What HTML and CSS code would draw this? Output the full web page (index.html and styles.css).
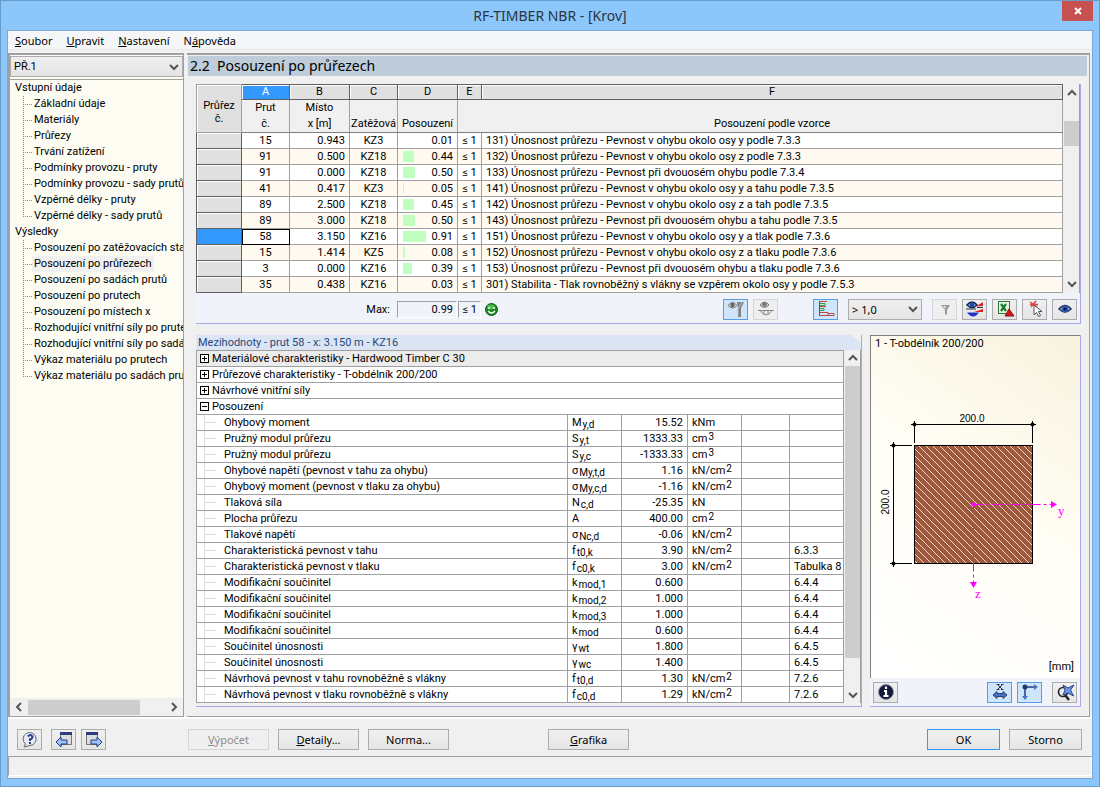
FILE: index.html
```
<!DOCTYPE html>
<html lang="cs">
<head>
<meta charset="utf-8">
<title>RF-TIMBER NBR - [Krov]</title>
<link rel="stylesheet" href="styles.css">
</head>
<body>
<div class="window">
  <header class="titlebar">
    <h1>RF-TIMBER NBR - [Krov]</h1>
    <button class="close" aria-label="Zavřít"><svg width="8" height="8" viewBox="0 0 8 8"><path d="M1 1l6 6M7 1l-6 6" stroke="#fff" stroke-width="2"/></svg></button>
  </header>
  <div class="client">
    <nav class="menu">
      <a href="#"><u>S</u>oubor</a><a href="#"><u>U</u>pravit</a><a href="#"><u>N</u>astavení</a><a href="#">N<u>á</u>pověda</a>
    </nav>
    <div class="panels">
      <aside class="side">
        <select class="case" aria-label="Případ"><option>PŘ.1</option></select>
        <div class="tree">
          <div class="root">Vstupní údaje</div>
          <ul>
            <li><a href="#">Základní údaje</a></li>
            <li><a href="#">Materiály</a></li>
            <li><a href="#">Průřezy</a></li>
            <li><a href="#">Trvání zatížení</a></li>
            <li><a href="#">Podmínky provozu - pruty</a></li>
            <li><a href="#">Podmínky provozu - sady prutů</a></li>
            <li><a href="#">Vzpěrné délky - pruty</a></li>
            <li><a href="#">Vzpěrné délky - sady prutů</a></li>
          </ul>
          <div class="root">Výsledky</div>
          <ul>
            <li><a href="#">Posouzení po zatěžovacích stavech</a></li>
            <li><a href="#" class="current">Posouzení po průřezech</a></li>
            <li><a href="#">Posouzení po sadách prutů</a></li>
            <li><a href="#">Posouzení po prutech</a></li>
            <li><a href="#">Posouzení po místech x</a></li>
            <li><a href="#">Rozhodující vnitřní síly po prutech</a></li>
            <li><a href="#">Rozhodující vnitřní síly po sadách prutů</a></li>
            <li><a href="#">Výkaz materiálu po prutech</a></li>
            <li><a href="#">Výkaz materiálu po sadách prutů</a></li>
          </ul>
        </div>
        <div class="hscroll">
          <svg width="18" height="16" viewBox="0 0 18 16"><path d="M11 4l-4 4 4 4" class="chev"/></svg>
          <div class="htrack"><div class="hthumb"></div></div>
          <svg width="18" height="16" viewBox="0 0 18 16"><path d="M7 4l4 4-4 4" class="chev"/></svg>
        </div>
      </aside>
      <main class="main">
        <h2>2.2&nbsp; Posouzení po průřezech</h2>
        <div class="body">
          <section class="results">
            <div class="gridrow">
              <table class="grid">
                <colgroup><col class="w45"><col class="w48"><col class="w60"><col class="w48"><col class="w60"><col class="w24"><col></colgroup>
                <thead>
                  <tr class="letters"><th rowspan="2" class="corner">Průřez<br>č.</th><th class="sel">A</th><th>B</th><th>C</th><th>D</th><th>E</th><th>F</th></tr>
                  <tr class="names"><th>Prut<br>č.</th><th>Místo<br>x [m]</th><th>Zatěžová</th><th>Posouzení</th><th class="nb"></th><th>Posouzení podle vzorce</th></tr>
                </thead>
                <tbody>
                  <tr><th></th><td>15</td><td>0.943</td><td>KZ3</td><td>0.01</td><td>≤ 1</td><td>131) Únosnost průřezu - Pevnost v ohybu okolo osy y podle 7.3.3</td></tr>
                  <tr><th></th><td>91</td><td>0.500</td><td>KZ18</td><td><i style="width:11px"></i>0.44</td><td>≤ 1</td><td>132) Únosnost průřezu - Pevnost v ohybu okolo osy z podle 7.3.3</td></tr>
                  <tr><th></th><td>91</td><td>0.000</td><td>KZ18</td><td><i style="width:12px"></i>0.50</td><td>≤ 1</td><td>133) Únosnost průřezu - Pevnost při dvouosém ohybu podle 7.3.4</td></tr>
                  <tr><th></th><td>41</td><td>0.417</td><td>KZ3</td><td><i style="width:1px"></i>0.05</td><td>≤ 1</td><td>141) Únosnost průřezu - Pevnost v ohybu okolo osy y a tahu podle 7.3.5</td></tr>
                  <tr><th></th><td>89</td><td>2.500</td><td>KZ18</td><td><i style="width:11px"></i>0.45</td><td>≤ 1</td><td>142) Únosnost průřezu - Pevnost v ohybu okolo osy z a tah podle 7.3.5</td></tr>
                  <tr><th></th><td>89</td><td>3.000</td><td>KZ18</td><td><i style="width:12px"></i>0.50</td><td>≤ 1</td><td>143) Únosnost průřezu - Pevnost při dvouosém ohybu a tahu podle 7.3.5</td></tr>
                  <tr class="active"><th></th><td>58</td><td>3.150</td><td>KZ16</td><td><i style="width:23px"></i>0.91</td><td>≤ 1</td><td>151) Únosnost průřezu - Pevnost v ohybu okolo osy y a tlak podle 7.3.6</td></tr>
                  <tr><th></th><td>15</td><td>1.414</td><td>KZ5</td><td><i style="width:2px"></i>0.08</td><td>≤ 1</td><td>152) Únosnost průřezu - Pevnost v ohybu okolo osy z a tlaku podle 7.3.6</td></tr>
                  <tr><th></th><td>3</td><td>0.000</td><td>KZ16</td><td><i style="width:9px"></i>0.39</td><td>≤ 1</td><td>153) Únosnost průřezu - Pevnost při dvouosém ohybu a tlaku podle 7.3.6</td></tr>
                  <tr><th></th><td>35</td><td>0.438</td><td>KZ16</td><td>0.03</td><td>≤ 1</td><td>301) Stabilita - Tlak rovnoběžný s vlákny se vzpěrem okolo osy y podle 7.5.3</td></tr>
                </tbody>
              </table>
              <div class="vscroll">
                <svg width="16" height="18" viewBox="0 0 16 18"><path d="M4 11l4-4 4 4" class="chev"/></svg>
                <div class="vtrack t1"><div class="vthumb"></div></div>
                <svg width="16" height="18" viewBox="0 0 16 18"><path d="M4 7l4 4 4-4" class="chev"/></svg>
              </div>
            </div>
            <div class="tools">
              <span class="max">Max:</span>
              <output class="box maxv">0.99</output>
              <output class="box lim">≤ 1</output>
              <svg class="smile" width="13" height="13" viewBox="0 0 13 13"><circle cx="6.500" cy="6.500" r="6" fill="#168a1c" stroke="#0b5c10"/><ellipse cx="6" cy="4" rx="4" ry="2.500" fill="#7ddc7a" opacity=".6"/><path d="M4 4v2M9 4v2M3 8q3.500 4 7 0" stroke="#fff" stroke-width="1.300" fill="none"/></svg>
              <div class="toolset">
                <button class="tb on" aria-label="Zobrazit diagram"><svg width="20" height="18" viewBox="0 0 20 18"><path d="M2 5.500q4.500-6 9 0q-4.500 5-9 0z" fill="#d4d4cc" stroke="#777"/><circle cx="6.500" cy="5" r="2.200" fill="#666"/><path d="M11 2h7l-3 6v9h-3V8z" fill="#808080"/><path d="M16 2l-4 7v7" stroke="#b9c6cf" fill="none"/></svg></button>
                <button class="tb off" aria-label="Zobrazit průběh"><svg width="20" height="18" viewBox="0 0 20 18"><path d="M4 5q4.500-6 9 0q-4.500 5-9 0z" fill="#d4d4cc" stroke="#777"/><circle cx="8.500" cy="4.500" r="2.200" fill="#777"/><path d="M2 10.500h16M4 10.500q6 9 12 0M8 10v4M12 10v4" stroke="#888" fill="none"/></svg></button>
                <button class="tb on m36" aria-label="Barevné pruhy"><svg width="20" height="18" viewBox="0 0 20 18"><path d="M3.500 1v15" stroke="#555"/><path d="M4 3.500h5v2H4M4 8.500h4v2H4" stroke="#3f9a45" fill="none"/><path d="M4 1.500h7M4 6.500h6M4 12.500h8v3H4M12 13.500h6v2h-6" stroke="#c04848" fill="none"/></svg></button>
                <select class="filter" aria-label="Filtr posouzení"><option>&gt; 1,0</option></select>
                <button class="tb off" aria-label="Filtr"><svg width="20" height="18" viewBox="0 0 20 18"><path d="M6 5h9l-3 5v5l-2-1v-4z" fill="#999"/><path d="M8 6h3l-1 3z" fill="#e4e4e4"/></svg></button>
                <button class="tb" aria-label="Zobrazit výsledky"><svg width="20" height="18" viewBox="0 0 20 18"><path d="M2 5q5-6 10 0q-5 5-10 0z" fill="#cfe0ff" stroke="#123" stroke-width="1.500"/><circle cx="7" cy="4.500" r="2.500" fill="#114ab8"/><path d="M11 6.500L18 2v4zM9 12l9-3v3z" fill="#d22"/><path d="M1 9h10M12 7.500h6" stroke="#234"/><path d="M2 12.500h12q-6 8-12 0z" fill="#2233c4"/></svg></button>
                <button class="tb" aria-label="Export do Excelu"><svg width="20" height="18" viewBox="0 0 20 18"><rect x="3.500" y="1.500" width="11" height="12" fill="#e7f4e4" stroke="#2c7a37"/><path d="M6 4l5 7M11 4l-5 7" stroke="#1b7a2b" stroke-width="2.200"/><path d="M10 16l4-7 5 7z" fill="#d81414" stroke="#811"/></svg></button>
                <button class="tb" aria-label="Vybrat prut"><svg width="20" height="18" viewBox="0 0 20 18"><path d="M5 2l7 5M11 1L6 7M5 4.500h8" stroke="#d44" stroke-width="1.500"/><path d="M9 5v10l2.500-2.500 2 4 2-1-2-4h3.500z" fill="#fff" stroke="#555"/></svg></button>
                <button class="tb" aria-label="Režim zobrazení"><svg width="20" height="18" viewBox="0 0 20 18"><path d="M4 9q6-7 12 0q-6 6-12 0z" fill="#dbe6fb" stroke="#25345e" stroke-width="1.500"/><circle cx="10" cy="9" r="3.500" fill="#2c59b4"/><circle cx="10" cy="9" r="1.500" fill="#0b1740"/></svg></button>
              </div>
            </div>
          </section>
          <div class="lower">
            <section class="details">
              <h3>Mezihodnoty - prut 58 - x: 3.150 m - KZ16</h3>
              <div class="gridrow">
                <table class="vals">
                  <colgroup><col><col class="w54"><col class="w66"><col class="w54"><col class="w48"><col class="w54"></colgroup>
                  <tbody>
                    <tr class="grp shade"><td colspan="6"><button class="exp" aria-label="Rozbalit"></button>Materiálové charakteristiky - Hardwood Timber C 30</td></tr>
                    <tr class="grp"><td colspan="6"><button class="exp" aria-label="Rozbalit"></button>Průřezové charakteristiky - T-obdélník 200/200</td></tr>
                    <tr class="grp"><td colspan="6"><button class="exp" aria-label="Rozbalit"></button>Návrhové vnitřní síly</td></tr>
                    <tr class="grp"><td colspan="6"><button class="exp open" aria-label="Sbalit"></button>Posouzení</td></tr>
                    <tr><td>Ohybový moment</td><td>M<sub>y,d</sub></td><td>15.52</td><td>kNm</td><td></td><td></td></tr>
                    <tr><td>Pružný modul průřezu</td><td>S<sub>y,t</sub></td><td>1333.33</td><td>cm<sup>3</sup></td><td></td><td></td></tr>
                    <tr><td>Pružný modul průřezu</td><td>S<sub>y,c</sub></td><td>-1333.33</td><td>cm<sup>3</sup></td><td></td><td></td></tr>
                    <tr><td>Ohybové napětí (pevnost v tahu za ohybu)</td><td>σ<sub>My,t,d</sub></td><td>1.16</td><td>kN/cm<sup>2</sup></td><td></td><td></td></tr>
                    <tr><td>Ohybový moment (pevnost v tlaku za ohybu)</td><td>σ<sub>My,c,d</sub></td><td>-1.16</td><td>kN/cm<sup>2</sup></td><td></td><td></td></tr>
                    <tr><td>Tlaková síla</td><td>N<sub>c,d</sub></td><td>-25.35</td><td>kN</td><td></td><td></td></tr>
                    <tr><td>Plocha průřezu</td><td>A</td><td>400.00</td><td>cm<sup>2</sup></td><td></td><td></td></tr>
                    <tr><td>Tlakové napětí</td><td>σ<sub>Nc,d</sub></td><td>-0.06</td><td>kN/cm<sup>2</sup></td><td></td><td></td></tr>
                    <tr><td>Charakteristická pevnost v tahu</td><td>f<sub>t0,k</sub></td><td>3.90</td><td>kN/cm<sup>2</sup></td><td></td><td>6.3.3</td></tr>
                    <tr><td>Charakteristická pevnost v tlaku</td><td>f<sub>c0,k</sub></td><td>3.00</td><td>kN/cm<sup>2</sup></td><td></td><td>Tabulka 8</td></tr>
                    <tr><td>Modifikační součinitel</td><td>k<sub>mod,1</sub></td><td>0.600</td><td></td><td></td><td>6.4.4</td></tr>
                    <tr><td>Modifikační součinitel</td><td>k<sub>mod,2</sub></td><td>1.000</td><td></td><td></td><td>6.4.4</td></tr>
                    <tr><td>Modifikační součinitel</td><td>k<sub>mod,3</sub></td><td>1.000</td><td></td><td></td><td>6.4.4</td></tr>
                    <tr><td>Modifikační součinitel</td><td>k<sub>mod</sub></td><td>0.600</td><td></td><td></td><td>6.4.4</td></tr>
                    <tr><td>Součinitel únosnosti</td><td>γ<sub>wt</sub></td><td>1.800</td><td></td><td></td><td>6.4.5</td></tr>
                    <tr><td>Součinitel únosnosti</td><td>γ<sub>wc</sub></td><td>1.400</td><td></td><td></td><td>6.4.5</td></tr>
                    <tr><td>Návrhová pevnost v tahu rovnoběžně s vlákny</td><td>f<sub>t0,d</sub></td><td>1.30</td><td>kN/cm<sup>2</sup></td><td></td><td>7.2.6</td></tr>
                    <tr><td>Návrhová pevnost v tlaku rovnoběžně s vlákny</td><td>f<sub>c0,d</sub></td><td>1.29</td><td>kN/cm<sup>2</sup></td><td></td><td>7.2.6</td></tr>
                  </tbody>
                </table>
                <div class="vscroll">
                  <svg width="16" height="16" viewBox="0 0 16 16"><path d="M4 10l4-4 4 4" class="chev"/></svg>
                  <div class="vtrack t2"><div class="vthumb"></div></div>
                  <svg width="16" height="16" viewBox="0 0 16 16"><path d="M4 6l4 4 4-4" class="chev"/></svg>
                </div>
              </div>
            </section>
            <section class="preview">
              <div class="canvas">
                <div class="caption">1 - T-obdélník 200/200</div>
                <svg class="drawing" width="209" height="200" viewBox="0 70 209 200">
                  <defs><pattern id="hatch" width="7" height="7" patternUnits="userSpaceOnUse"><rect width="7" height="7" fill="#a0522d"/><path d="M-1 2.500l6 6M2.500-1l6 6" stroke="#995c48" stroke-width="2"/><path d="M-1-1l9 9M-1 6l2 2M6-1l2 2" stroke="#f3ddd0" stroke-width="1"/></pattern></defs>
                  <rect x="43.500" y="110.500" width="118" height="118" fill="url(#hatch)" stroke="#000"/>
                  <path d="M40 89.500h125M43.500 86v22M161.500 86v22M22.500 107v125M19 110.500h22M19 228.500h22" stroke="#000" fill="none"/>
                  <g><circle cx="43.500" cy="89.500" r="2"/><circle cx="161.500" cy="89.500" r="2"/><circle cx="22.500" cy="110.500" r="2"/><circle cx="22.500" cy="228.500" r="2"/></g>
                  <text x="101" y="87" text-anchor="middle">200.0</text>
                  <text x="18" y="167" text-anchor="middle" transform="rotate(-90 18 167)">200.0</text>
                  <path d="M102.500 169.500h78M102.500 169.500v78" stroke="#f0f" stroke-dasharray="10 3 3 3" fill="none"/>
                  <g fill="#f0f"><circle cx="102.500" cy="169.500" r="2"/><path d="M180 166v7l6-3.500zM99 247h7l-3.500 6z"/>
                  <text class="ax" x="187" y="180">y</text><text class="ax" x="104" y="263">z</text></g>
                </svg>
                <div class="unit">[mm]</div>
              </div>
              <div class="ptools">
                <button class="tb" aria-label="Informace"><svg width="20" height="18" viewBox="0 0 20 18"><circle cx="10" cy="9" r="7.500" fill="#14183c" stroke="#8a8fa5"/><path d="M10 3.500v2.500M8 8h2v5M7.500 13h5" stroke="#fff" stroke-width="2.200" fill="none"/></svg></button>
                <button class="tb on push" aria-label="Kóty"><svg width="20" height="18" viewBox="0 0 20 18"><path d="M7.500 1.500l5 5M12.500 1.500l-5 5M6.500 1.500h3M11 1.500h2.500M6.500 6.500h3M11 6.500h2.500" stroke="#333"/><path d="M3 12l4-3.500v2h6v-2l4 3.500-4 3.500v-2H7v2z" fill="#4a72c4" stroke="#2a3f77"/></svg></button>
                <button class="tb on" aria-label="Osy"><svg width="20" height="18" viewBox="0 0 20 18"><path d="M5 14V4h10" stroke="#4d669f" stroke-width="2" fill="none"/><path d="M14 1l4 3-4 3zM2 13h6l-3 4z" fill="#4a72c4"/><circle cx="5" cy="4" r="2.500" fill="#233763"/></svg></button>
                <button class="tb" aria-label="Zvětšit vše"><svg width="20" height="18" viewBox="0 0 20 18"><circle cx="8" cy="9" r="4.500" fill="#e4e9f2" stroke="#222" stroke-width="1.600"/><path d="M10 12l4 5" stroke="#222" stroke-width="2.500"/><path d="M8 2l5 3 6-3-3.500 5 3 6-5.500-3-5 2 2-5z" fill="#6d93e0" stroke="#284380"/></svg></button>
              </div>
            </section>
          </div>
        </div>
      </main>
    </div>
    <footer class="bar">
      <button class="tb" aria-label="Nápověda"><svg width="20" height="18" viewBox="0 0 20 18"><path d="M4 16l1.500-3A6.500 6.500 0 1 1 10 14.500z" fill="#e8ebf2" stroke="#667"/><path d="M8 5.500q2.500-3 4.500 0q0 2-2.500 3v1.500M10 11v2" stroke="#263c88" stroke-width="2" fill="none"/></svg></button>
      <button class="tb" aria-label="Předchozí"><svg width="20" height="18" viewBox="0 0 20 18"><path d="M6.500 1.500h11v12h-11z" fill="#ddd" stroke="#777"/><path d="M6 2.500h12" stroke="#2b3d80" stroke-width="3"/><path d="M2 11l5-5v3h6v4H7v3z" fill="#9fc3f5" stroke="#1e3b8a"/></svg></button>
      <button class="tb" aria-label="Další"><svg width="20" height="18" viewBox="0 0 20 18"><path d="M2.500 1.500h11v12h-11z" fill="#ddd" stroke="#777"/><path d="M2 2.500h12" stroke="#2b3d80" stroke-width="3"/><path d="M18 11l-5-5v3H7v4h6v3z" fill="#9fc3f5" stroke="#1e3b8a"/></svg></button>
      <button class="btn calc" disabled><u>V</u>ýpočet</button>
      <button class="btn"><u>D</u>etaily...</button>
      <button class="btn">Norma...</button>
      <button class="btn graph"><u>G</u>rafika</button>
      <button class="btn ok">OK</button>
      <button class="btn cancel">Storno</button>
    </footer>
    <div class="status"></div>
  </div>
</div>
</body>
</html>
```
FILE: styles.css
```
* { box-sizing: border-box; }
body { margin: 0; font: 11px/16px "Roboto", sans-serif; color: #000; }
h1, h2, h3, ul { margin: 0; padding: 0; font-weight: normal; }
button, select, output { font: inherit; color: inherit; margin: 0; }
a { color: inherit; text-decoration: none; }
.window { min-height: 100vh; display: flex; flex-direction: column; background: #8cc7fb; border: 1px solid #6b9bc8; padding: 0 6px 7px; }
.titlebar { position: relative; height: 29px; display: flex; align-items: center; justify-content: center; }
.titlebar h1 { font: 14px/28px "Noto Sans", sans-serif; color: #2b3440; }
.close { position: absolute; top: 0; right: 0; width: 31px; height: 20px; border: 0; padding: 0; background: #c75050; display: grid; place-items: center; }
.client { flex: 1; display: flex; flex-direction: column; background: #f0f0f0; border: 1px solid #7ba9d3; }
.menu { height: 19px; display: flex; gap: 14px; padding-left: 7px; background: #f5f6f7; border-bottom: 1px solid #e8e8e8; font: 11px/20px "Noto Sans", sans-serif; }
.panels { flex: 1; display: flex; gap: 3px; margin-top: 3px; min-height: 0; }
.side { width: 176px; flex: none; display: flex; flex-direction: column; border: 2px solid #a0a0a0; border-width: 2px 1px 1px 2px; background: #fcfcf2; overflow: hidden; }
.case { appearance: none; height: 21px; margin-top: 1px; border: 1px solid #acacac; border-radius: 0; padding: 0 3px; background: url("data:image/svg+xml,%3Csvg xmlns='http://www.w3.org/2000/svg' width='10' height='8'%3E%3Cpath d='M1 2l4 4 4-4' fill='none' stroke='%23555' stroke-width='2'/%3E%3C/svg%3E") no-repeat right 3px center, linear-gradient(#efefef, #e4e4e4); }
.tree { flex: 1; margin-top: 2px; border-top: 1px solid #a0a0a0; overflow: hidden; white-space: nowrap; }
.root { padding-left: 5px; }
.tree ul { list-style: none; padding-left: 13px; }
.tree li { display: flex; align-items: center; height: 16px; background: repeating-linear-gradient(#888 0 1px, transparent 1px 2px) 0 0 / 1px 100% no-repeat; }
.tree li:last-child { background-size: 1px 8px; }
.tree li::before { content: ""; width: 9px; flex: none; border-top: 1px dotted #888; }
.tree li a { padding: 0 2px; }
.tree .current { background: #f0f0f0; }
.hscroll { display: flex; height: 18px; align-items: center; background: #f0f0f0; }
.htrack { flex: 1; }
.hthumb { width: 82%; height: 15px; background: #cdcdcd; }
.chev { fill: none; stroke: #555; stroke-width: 2; }
.main { flex: 1; min-width: 0; display: flex; flex-direction: column; margin-right: 2px; border: 2px solid #a0a0a0; border-width: 2px 1px 1px 0; }
.main h2 { height: 20px; margin: 1px 2px 0 1px; padding-left: 2px; background: #bfccd9; font: 14px/20px "Noto Sans", sans-serif; }
.body { flex: 1; display: flex; flex-direction: column; gap: 11px; padding: 8px 8px 9px 9px; line-height: 15px; }
.results { border-right: 1px solid #a9a9ea; border-bottom: 1px solid #a9a9ea; background: #f0f4fa; }
.gridrow { display: flex; }
table { border-collapse: collapse; table-layout: fixed; flex: 1; width: 0; min-width: 0; background: #fff; }
th, td { font-weight: normal; padding: 0 4px; border: 1px solid #a0a0a0; white-space: nowrap; overflow: hidden; }
.w24 { width: 24px; } .w45 { width: 45px; } .w48 { width: 48px; } .w54 { width: 54px; } .w60 { width: 60px; } .w66 { width: 66px; }
.letters th { height: 15px; line-height: 12px; background: #e0e0e0; border-color: #606060; box-shadow: inset 1px 1px #fff; }
.letters .sel { background: #3399ff; color: #fff; }
.letters .corner { line-height: 13px; border-color: #a0a0a0; padding-top: 6px; }
.names th { height: 33px; padding: 0; background: #f0f0f0; vertical-align: bottom; line-height: 16px; border-bottom-color: #808080; }
.names .nb { border-right-color: #f0f0f0; }
.grid td, .grid tbody th { height: 16px; }
.grid tbody th { background: #e0e0e0; border-color: #606060; box-shadow: inset 1px 1px #fff; }
.grid tbody tr:nth-child(even) { background: #fffaf0; }
.grid td { text-align: center; }
.grid td:nth-child(3), .grid td:nth-child(5) { text-align: right; }
.grid td:last-child { text-align: left; }
.grid i { float: left; height: 11px; margin-top: 2px; margin-left: 1px; background: #c0ffc0; }
.grid .active th { background: #3399ff; box-shadow: none; }
.grid .active td:nth-child(2) { outline: 1px solid #000; outline-offset: -1px; border-color: #000; }
.vscroll { width: 17px; flex: none; display: flex; flex-direction: column; padding-left: 1px; background: #f0f0f0; border-right: 1px solid #a0a0a0; }
.vtrack { flex: 1; display: flex; flex-direction: column; }
.vthumb { background: #cdcdcd; }
.t1 { padding-top: 19px; } .t1 .vthumb { height: 25px; }
.t2 .vthumb { height: 91%; }
.tools { min-height: 30px; display: flex; align-items: center; padding: 2px 3px 0 0; }
.max { width: 194px; text-align: right; }
.box { height: 17px; border: 1px solid #a0a0a0; border-right-color: #fff; border-bottom-color: #fff; text-align: right; padding-right: 3px; }
.maxv { width: 60px; margin-left: 7px; }
.lim { width: 23px; margin: 0 4px 0 1px; }
.toolset { flex: 1; display: flex; gap: 5px; justify-content: flex-end; }
.tb { width: 25px; height: 21px; flex: none; padding: 0; border: 1px solid #acacac; background: linear-gradient(#f0f0f0, #e5e5e5); display: grid; place-items: center; }
.tb.on { border-color: #569de5; background: #cfe5fb; }
.tb.off { border-color: #d5d5d5; background: #efefef; }
.m36 { margin-left: 30px; }
.filter { appearance: none; width: 74px; height: 21px; margin: 0 5px; padding: 0 3px; border: 1px solid #acacac; border-radius: 0; font: 11px/19px "Noto Sans", sans-serif; background: url("data:image/svg+xml,%3Csvg xmlns='http://www.w3.org/2000/svg' width='10' height='8'%3E%3Cpath d='M1 2l4 4 4-4' fill='none' stroke='%23555' stroke-width='2'/%3E%3C/svg%3E") no-repeat right 3px center, linear-gradient(#efefef, #e4e4e4); }
.lower { flex: 1; display: flex; gap: 8px; }
.details { flex: 1; min-width: 0; border-right: 1px solid #a9a9ea; border-bottom: 1px solid #a9a9ea; }
.details h3 { padding-left: 2px; background: #dbe5f3; color: #1f497d; font: inherit; clip-path: polygon(0 0, calc(100% - 10px) 0, 100% 8px, 100% 100%, 0 100%); }
.vals td { height: 16px; }
.vals tr:not(.grp) td:first-child { padding-left: 27px; background: linear-gradient(#dcdcdc, #dcdcdc) 7px 7px / 12px 1px no-repeat, linear-gradient(#dcdcdc, #dcdcdc) 7px 0 / 1px 100% no-repeat; }
.vals td:nth-child(3) { text-align: right; }
.vals .grp td { padding-left: 3px; }
.shade { background: #ececec; }
.exp { width: 9px; height: 9px; padding: 0; margin-right: 3px; border: 1px solid #000; background: linear-gradient(#000, #000) center / 5px 1px no-repeat, linear-gradient(#000, #000) center / 1px 5px no-repeat, #fff; vertical-align: 0; }
.exp.open { background: linear-gradient(#000, #000) center / 5px 1px no-repeat, #fff; }
sub, sup { font-size: 10px; line-height: 0; margin-left: 1px; }
sub { vertical-align: -2px; }
sup { vertical-align: 2px; }
.preview { width: 211px; flex: none; display: flex; flex-direction: column; border-right: 1px solid #a9a9ea; border-bottom: 1px solid #a9a9ea; }
.canvas { flex: 1; display: flex; flex-direction: column; border: 1px solid #808080; border-width: 1px 0 0 1px; background: linear-gradient(215deg, #f8f3df 0%, #fffdf4 45%, #fffefa 70%, #fff 100%); }
.caption { padding: 0 4px; }
.drawing { margin: auto 0; flex: none; width: 100%; font: 10px "Liberation Sans", sans-serif; }
.ax { font: 13px "Liberation Serif", serif; }
.unit { text-align: right; padding: 0 6px 4px; }
.ptools { display: flex; gap: 5px; align-items: center; height: 28px; padding: 0 3px; background: #f0f4fa; }
.ptools .push { margin-left: auto; }
.ptools .tb:last-child { margin-left: 5px; }
.bar { display: flex; align-items: center; padding: 10px 10px 6px 9px; gap: 5px; border-top: 2px solid #fff; font: 11px/16px "Noto Sans", sans-serif; }
.bar .tb:first-child { margin-right: 4px; }
.btn { width: 81px; height: 21px; padding: 0; border: 1px solid #acacac; background: linear-gradient(#f0f0f0, #e5e5e5); margin-right: 4px; }
.btn:disabled { color: #8d8d8d; border-color: #d5d5d5; background: #efefef; }
.calc { margin-left: 77px; }
.graph { margin-left: 90px; }
.ok { width: 73px; margin-left: auto; border-color: #3399ff; }
.cancel { width: 73px; margin-right: 0; }
.status { height: 20px; border: 1px solid #a0a0a0; border-right-color: #fff; border-bottom-color: #fff; margin-bottom: 2px; }
```
